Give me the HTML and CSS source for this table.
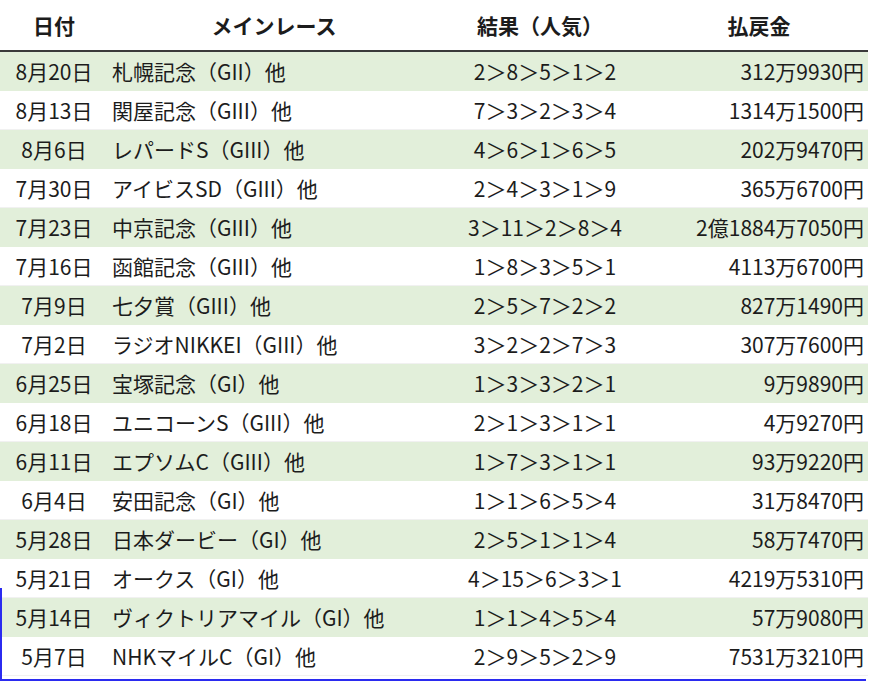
FILE: index.html
```html
<!DOCTYPE html>
<html lang="ja">
<head>
<meta charset="utf-8">
<title>メインレース結果</title>
<link rel="stylesheet" href="styles.css">
</head>
<body>
<div class="sheet">
  <div class="row head">
    <div class="c-date">日付</div>
    <div class="c-race">メインレース</div>
    <div class="c-result">結果（人気）</div>
    <div class="c-pay">払戻金</div>
  </div>
  <div class="row alt"><div class="c-date">8月20日</div><div class="c-race">札幌記念（GII）他</div><div class="c-result">2＞8＞5＞1＞2</div><div class="c-pay">312万9930円</div></div>
  <div class="row"><div class="c-date">8月13日</div><div class="c-race">関屋記念（GIII）他</div><div class="c-result">7＞3＞2＞3＞4</div><div class="c-pay">1314万1500円</div></div>
  <div class="row alt"><div class="c-date">8月6日</div><div class="c-race">レパードS（GIII）他</div><div class="c-result">4＞6＞1＞6＞5</div><div class="c-pay">202万9470円</div></div>
  <div class="row"><div class="c-date">7月30日</div><div class="c-race">アイビスSD（GIII）他</div><div class="c-result">2＞4＞3＞1＞9</div><div class="c-pay">365万6700円</div></div>
  <div class="row alt"><div class="c-date">7月23日</div><div class="c-race">中京記念（GIII）他</div><div class="c-result">3＞11＞2＞8＞4</div><div class="c-pay">2億1884万7050円</div></div>
  <div class="row"><div class="c-date">7月16日</div><div class="c-race">函館記念（GIII）他</div><div class="c-result">1＞8＞3＞5＞1</div><div class="c-pay">4113万6700円</div></div>
  <div class="row alt"><div class="c-date">7月9日</div><div class="c-race">七夕賞（GIII）他</div><div class="c-result">2＞5＞7＞2＞2</div><div class="c-pay">827万1490円</div></div>
  <div class="row"><div class="c-date">7月2日</div><div class="c-race">ラジオNIKKEI（GIII）他</div><div class="c-result">3＞2＞2＞7＞3</div><div class="c-pay">307万7600円</div></div>
  <div class="row alt"><div class="c-date">6月25日</div><div class="c-race">宝塚記念（GI）他</div><div class="c-result">1＞3＞3＞2＞1</div><div class="c-pay">9万9890円</div></div>
  <div class="row"><div class="c-date">6月18日</div><div class="c-race">ユニコーンS（GIII）他</div><div class="c-result">2＞1＞3＞1＞1</div><div class="c-pay">4万9270円</div></div>
  <div class="row alt"><div class="c-date">6月11日</div><div class="c-race">エプソムC（GIII）他</div><div class="c-result">1＞7＞3＞1＞1</div><div class="c-pay">93万9220円</div></div>
  <div class="row"><div class="c-date">6月4日</div><div class="c-race">安田記念（GI）他</div><div class="c-result">1＞1＞6＞5＞4</div><div class="c-pay">31万8470円</div></div>
  <div class="row alt"><div class="c-date">5月28日</div><div class="c-race">日本ダービー（GI）他</div><div class="c-result">2＞5＞1＞1＞4</div><div class="c-pay">58万7470円</div></div>
  <div class="row"><div class="c-date">5月21日</div><div class="c-race">オークス（GI）他</div><div class="c-result">4＞15＞6＞3＞1</div><div class="c-pay">4219万5310円</div></div>
  <div class="row alt"><div class="c-date">5月14日</div><div class="c-race">ヴィクトリアマイル（GI）他</div><div class="c-result">1＞1＞4＞5＞4</div><div class="c-pay">57万9080円</div></div>
  <div class="row"><div class="c-date">5月7日</div><div class="c-race">NHKマイルC（GI）他</div><div class="c-result">2＞9＞5＞2＞9</div><div class="c-pay">7531万3210円</div></div>
  <div class="selection"></div>
</div>
</body>
</html>
```
FILE: styles.css
```css
html, body {
  margin: 0;
  padding: 0;
  background: #ffffff;
}
body {
  font-family: "Noto Sans CJK JP", "Noto Sans", sans-serif;
  font-size: 21px;
  color: #1c1c1c;
}
.sheet {
  position: relative;
  width: 868px;
  height: 684px;
}
.row {
  display: grid;
  grid-template-columns: 108px 332px 210px 218px;
  height: 39px;
  align-items: center;
  line-height: 1;
  box-shadow: inset 0 -1px 0 #f1f1f1;
}
.row.alt {
  background: #e2efda;
  box-shadow: none;
}
.row.head {
  height: 50px;
  border-bottom: 2px solid #3a3a3a;
  font-weight: bold;
  box-shadow: none;
}
.row.head .c-race { text-align: center; padding-left: 0; }
.row.head .c-result { padding-right: 10px; }
.row.head .c-pay { text-align: center; padding-right: 0; }
.c-date { text-align: center; white-space: nowrap; }
.c-race { text-align: left; padding-left: 4px; white-space: nowrap; }
.c-result { text-align: center; white-space: nowrap; }
.c-pay { text-align: right; padding-right: 4px; white-space: nowrap; }
.selection {
  position: absolute;
  left: 0;
  top: 588px;
  width: 866px;
  height: 93px;
  border-left: 2px solid #2b2bf0;
  border-bottom: 2px solid #2b2bf0;
  box-sizing: border-box;
  pointer-events: none;
}
```
